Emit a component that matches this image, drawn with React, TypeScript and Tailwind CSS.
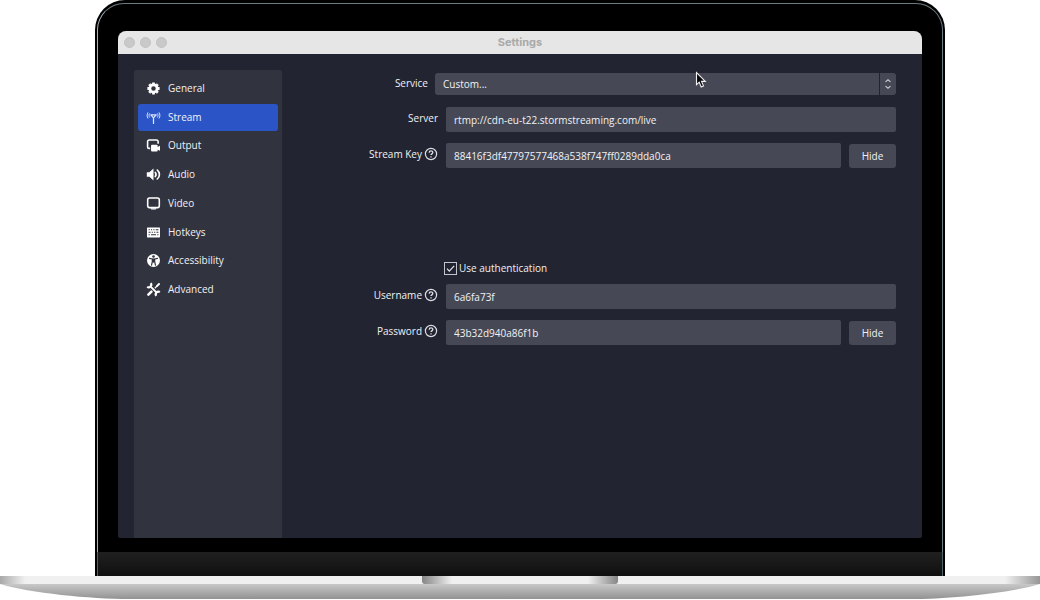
import React, { useState } from "react";

type IconProps = { children: React.ReactNode };

function Icon({ children }: IconProps) {
  return (
    <svg viewBox="0.4 0.4 13.2 13.2" className="h-[13px] w-[13px] shrink-0 overflow-visible" fill="none" aria-hidden="true">
      {children}
    </svg>
  );
}

const icons: Record<string, React.ReactNode> = {
  General: (
    <>
      <circle cx="7" cy="7" r="3.700" stroke="#fff" strokeWidth="2.800" />
      <path
        d="M7 .8v1.600M7 11.600v1.600M.8 7h1.600M11.600 7h1.600M2.600 2.600l1.100 1.100M10.300 10.300l1.100 1.100M2.600 11.400l1.100-1.100M10.300 3.700l1.100-1.100"
        stroke="#fff"
        strokeWidth="2.800"
      />
    </>
  ),
  Stream: (
    <g stroke="#dbe5ff" strokeLinecap="round">
      <path d="M4.300 4.400h5.400L7 7.400zM7 7.400v5.600" strokeWidth="1.300" strokeLinejoin="round" />
      <path
        d="M2.900 3.200c-.7 1-.7 2.400 0 3.400M1.200 2.200c-1 1.600-1 3.800 0 5.400M11.100 3.200c.7 1 .7 2.400 0 3.400M12.800 2.200c1 1.600 1 3.800 0 5.400"
        strokeWidth="1"
      />
    </g>
  ),
  Output: (
    <>
      <path
        d="M3.600 9.900H2.400A1.500 1.500 0 0 1 1 8.400V3a1.500 1.500 0 0 1 1.500-1.500h7.700A1.500 1.500 0 0 1 11.700 3v2.300"
        stroke="#fff"
        strokeWidth="1.600"
      />
      <path
        d="M5.500 6.300h4.700c.6 0 1 .4 1 1v1.100l2.400-1.100v5l-2.400-1.100v.9c0 .6-.4 1-1 1H5.500c-.6 0-1-.4-1-1V7.300c0-.6.4-1 1-1z"
        fill="#fff"
      />
    </>
  ),
  Audio: (
    <>
      <path d="M.2 4.700h2.600l4.200-3.800v12.200L2.800 9.300H.2z" fill="#fff" />
      <path
        d="M8.800 4.900c.9 1.200.9 3 0 4.200M10.900 2.500c2.800 2.200 2.800 6.800 0 9"
        stroke="#fff"
        strokeWidth="1.700"
        strokeLinecap="round"
      />
    </>
  ),
  Video: (
    <>
      <rect x="1.100" y="1.500" width="11.800" height="9.700" rx="1.800" stroke="#fff" strokeWidth="1.600" />
      <path d="M4 11.700h6l-.7 1.500H4.700z" fill="#fff" />
    </>
  ),
  Hotkeys: (
    <>
      <rect x=".4" y="1.800" width="13.200" height="10.200" rx=".6" fill="#fff" />
      <path
        d="M2 4.200h1.200M4.400 4.200h1.200M6.800 4.200H8M9.200 4.200h2.800M2 6.700h2M5.200 6.700h1.200M7.600 6.700h1.200M10 6.700h2M2 9.300h1.200M4.400 9.300h5.200M10.800 9.300H12"
        stroke="#31333f"
        strokeWidth="1.100"
      />
    </>
  ),
  Accessibility: (
    <>
      <circle cx="7" cy="7" r="6.600" fill="#fff" />
      <circle cx="7" cy="2.900" r="1.300" fill="#31333f" />
      <path
        d="M3 4.900l2.700.6h2.600l2.700-.6M7 5.500v3M5.800 5.700v2.500l-.8 3.500M8.200 5.700v2.500l.8 3.500"
        stroke="#31333f"
        strokeWidth="1.200"
        strokeLinecap="round"
      />
      <path d="M5.600 5.200h2.800v3.600H5.600z" fill="#31333f" />
    </>
  ),
  Advanced: (
    <g stroke="#fff">
      <path d="M3.800 3.800l6.400 6.400" strokeWidth="2" />
      <path d="M4.200.6c1.800 2.300-1.300 5.400-3.600 3.600" strokeWidth="2.200" />
      <path d="M9.800 13.400c-1.800-2.300 1.300-5.400 3.600-3.600" strokeWidth="2.200" />
      <path d="M8.300 5.700l2.500-2.500" strokeWidth="1.200" />
      <path d="M10.700 3.300l1.900-1.900" strokeWidth="2" strokeLinecap="round" />
      <path d="M4.900 9.100l-3.100 3.100" strokeWidth="2.600" strokeLinecap="round" />
    </g>
  ),
};

const sections = Object.keys(icons);

function HelpIcon() {
  return (
    <svg viewBox="0 0 14 14" className="h-3.5 w-3.5 shrink-0" fill="none" stroke="#dcdde3" aria-hidden="true">
      <circle cx="7" cy="7" r="5.600" strokeWidth="1.200" />
      <path d="M5.200 5.700c0-2.300 3.600-2.300 3.600-.1 0 1.200-1.800 1.300-1.800 2.500" strokeWidth="1.300" />
      <path d="M7 9.200v1.300" strokeWidth="1.300" />
    </svg>
  );
}

type FieldProps = { id: string; label: string; value: string; help?: boolean; secret?: boolean };

function Field({ id, label, value, help, secret }: FieldProps) {
  const [hidden, setHidden] = useState(false);
  return (
    <div className="flex items-start gap-2">
      <label htmlFor={id} className="flex w-[156px] shrink-0 items-center justify-end gap-0.5 leading-[22px]">
        {label}
        {help && <HelpIcon />}
      </label>
      <input
        id={id}
        type={hidden ? "password" : "text"}
        defaultValue={value}
        className="h-[25px] min-w-0 flex-1 rounded-[2px] bg-[#464955] px-2 outline-none"
      />
      {secret && (
        <button
          type="button"
          onClick={() => setHidden(!hidden)}
          className="h-6 w-[47px] shrink-0 self-end rounded-[3px] bg-[#464955]"
        >
          {hidden ? "Show" : "Hide"}
        </button>
      )}
    </div>
  );
}

function Sidebar() {
  const [active, setActive] = useState("Stream");
  return (
    <nav className="w-[148px] shrink-0 rounded-t-[3px] bg-[#31333f] px-1 pt-1">
      <ul className="grid h-[230px] grid-rows-8">
        {sections.map((name) => (
          <li key={name} className="flex">
            <button
              type="button"
              onClick={() => setActive(name)}
              className={
                name === active
                  ? "my-px flex flex-1 items-center gap-2 rounded-[3px] bg-[#2b55c7] px-[9px]"
                  : "my-px flex flex-1 items-center gap-2 rounded-[3px] px-[9px]"
              }
            >
              <Icon>{icons[name]}</Icon>
              {name}
            </button>
          </li>
        ))}
      </ul>
    </nav>
  );
}

function StreamForm() {
  return (
    <form className="flex min-w-0 flex-1 flex-col pt-[3px] pr-[26px]">
      <div className="flex items-start gap-[7px]">
        <label htmlFor="service" className="w-[146px] shrink-0 text-right leading-5">
          Service
        </label>
        <div className="relative flex min-w-0 flex-1">
          <select id="service" className="h-[22px] w-full appearance-none rounded-[3px] bg-[#464955] px-2 outline-none">
            <option>Custom...</option>
          </select>
          <span className="pointer-events-none absolute inset-y-0 right-0 flex w-[17px] items-center justify-center border-l border-[#222431]">
            <svg viewBox="0 0 8 12" className="h-3 w-2" fill="none" stroke="#c9cad0" strokeWidth="1.200" aria-hidden="true">
              <path d="M1.500 3.900L4 1.700l2.500 2.200M1.500 8.100L4 10.300l2.500-2.200" />
            </svg>
          </span>
        </div>
      </div>
      <div className="mt-3 flex flex-col gap-[11px]">
        <Field id="server" label="Server" value="rtmp://cdn-eu-t22.stormstreaming.com/live" />
        <Field id="key" label="Stream Key" value="88416f3df47797577468a538f747ff0289dda0ca" help secret />
      </div>
      <label className="mt-[93px] ml-[162px] flex items-center gap-0.5 self-start leading-[14px]">
        <span className="grid">
          <input
            type="checkbox"
            defaultChecked
            className="peer col-start-1 row-start-1 h-[13px] w-[13px] appearance-none border border-[#c4c5cc]"
          />
          <svg
            viewBox="0 0 13 13"
            className="pointer-events-none invisible col-start-1 row-start-1 h-[13px] w-[13px] peer-checked:visible"
            fill="none"
            stroke="#e6e6ea"
            strokeWidth="1.200"
            aria-hidden="true"
          >
            <path d="M3 6.700l2.300 2.400L10.200 3.900" />
          </svg>
        </span>
        Use authentication
      </label>
      <div className="mt-[9px] flex flex-col gap-[11px]">
        <Field id="username" label="Username" value="6a6fa73f" help />
        <Field id="password" label="Password" value="43b32d940a86f1b" help secret />
      </div>
    </form>
  );
}

function SettingsWindow() {
  return (
    <main className="flex flex-1 flex-col overflow-hidden rounded-t-[8px] rounded-b-[2px] bg-[#222431]">
      <header className="grid h-[23px] shrink-0 grid-cols-[1fr_auto_1fr] items-center bg-[#e6e6e6] px-1.5">
        <div className="flex gap-[5px]">
          <span className="h-[11px] w-[11px] rounded-full border border-[#c0c0c0] bg-[#c9c9c9]" />
          <span className="h-[11px] w-[11px] rounded-full border border-[#c0c0c0] bg-[#c9c9c9]" />
          <span className="h-[11px] w-[11px] rounded-full border border-[#c0c0c0] bg-[#c9c9c9]" />
        </div>
        <h1 className="font-['Inter',sans-serif] text-[11px] font-bold text-[#a9a9a9]">Settings</h1>
      </header>
      <div className="flex flex-1 pt-4 pl-4">
        <Sidebar />
        <StreamForm />
      </div>
    </main>
  );
}

export default function App() {
  return (
    <div className="flex min-h-screen flex-col bg-white font-['Open_Sans',sans-serif] text-[10px] text-[#f1f1f4]">
      <div className="relative mx-[95px] flex flex-1 flex-col overflow-hidden rounded-t-[30px] bg-black">
        <div className="mx-0.5 mt-[3px] flex flex-1 flex-col rounded-t-[27px] border-x border-t border-[#6c7c84] border-l-[#a3b4bd] px-5 pt-[27px] pb-3.5">
          <SettingsWindow />
        </div>
        <div className="mx-0.5 h-6 border-x border-[#50616a] bg-linear-to-b from-[#202020] to-[#101010]" />
        <svg viewBox="0 0 12 18" className="absolute top-[71px] left-[600px] h-[18px] w-3" aria-hidden="true">
          <path
            d="M1.500 1.500v12.200l2.700-2.500 2 4.700 2.300-1-2-4.500h3.800z"
            fill="#08080c"
            stroke="#f1f1f1"
            strokeWidth="1.100"
          />
        </svg>
      </div>
      <div className="flex h-2 justify-center bg-[linear-gradient(90deg,#a8a8a8,#f0f0f0_25px,#f0f0f0_calc(100%_-_35px),#969696)]">
        <div className="w-[196px] rounded-b-[3px] bg-[linear-gradient(90deg,#858585,#f0f0f0_30px,#f0f0f0_calc(100%_-_30px),#858585)]" />
      </div>
      <svg viewBox="0 0 1040 16" preserveAspectRatio="none" className="h-4 w-full" aria-hidden="true">
        <defs>
          <linearGradient id="underside" x1="0" y1="0" x2="0" y2="1">
            <stop offset="0" stopColor="#c8c8c8" />
            <stop offset="1" stopColor="#929292" />
          </linearGradient>
        </defs>
        <path d="M0 0H1040C1010 9 950 15 910 15H130C90 15 30 9 0 0z" fill="url(#underside)" />
      </svg>
    </div>
  );
}
